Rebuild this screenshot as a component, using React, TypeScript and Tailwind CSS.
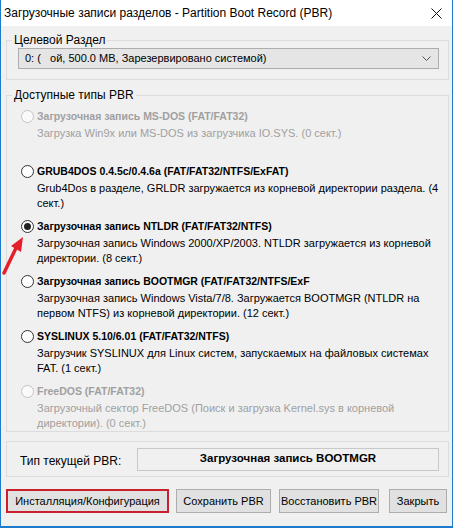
import React from "react";

type Item = {
  title: string;
  desc: string;
  disabled?: boolean;
  checked?: boolean;
};

const items: Item[] = [
  {
    title: "Загрузочная запись MS-DOS (FAT/FAT32)",
    desc: "Загрузка Win9x или MS-DOS из загрузчика IO.SYS. (0 сект.)",
    disabled: true,
  },
  {
    title: "GRUB4DOS 0.4.5c/0.4.6a (FAT/FAT32/NTFS/ExFAT)",
    desc: "Grub4Dos в разделе, GRLDR загружается из корневой директории раздела. (4 сект.)",
  },
  {
    title: "Загрузочная запись NTLDR (FAT/FAT32/NTFS)",
    desc: "Загрузочная запись Windows 2000/XP/2003. NTLDR загружается из корневой директории. (8 сект.)",
    checked: true,
  },
  {
    title: "Загрузочная запись BOOTMGR (FAT/FAT32/NTFS/ExF",
    desc: "Загрузочная запись Windows Vista/7/8. Загружается BOOTMGR  (NTLDR на первом NTFS) из корневой директории. (12 сект.)",
  },
  {
    title: "SYSLINUX 5.10/6.01 (FAT/FAT32/NTFS)",
    desc: "Загрузчик SYSLINUX для Linux систем, запускаемых на файловых системах FAT. (1 сект.)",
  },
  {
    title: "FreeDOS (FAT/FAT32)",
    desc: "Загрузочный сектор FreeDOS (Поиск и загрузка Kernel.sys в корневой директории). (0 сект.)",
    disabled: true,
  },
];

function Radio({ checked, disabled }: { checked?: boolean; disabled?: boolean }) {
  return (
    <div
      className={
        "w-[13px] h-[13px] rounded-full border flex items-center justify-center shrink-0 " +
        (disabled ? "border-[#c4c4c4] bg-[#fafafa]" : "border-[#333333] bg-white")
      }
    >
      {checked && <div className="w-[7px] h-[7px] rounded-full bg-[#222222]" />}
    </div>
  );
}

const ui = { fontFamily: '"Liberation Sans", Arial, sans-serif' };

export default function App() {
  return (
    <div
      className="relative w-[453px] h-[528px] bg-[#f0f0f0] border-x border-b-2 border-[#1c7bcb] flex flex-col text-black"
      style={ui}
    >
      {/* Title bar */}
      <div className="h-[26px] bg-white flex items-center justify-between pl-[3px] pr-[10px] shrink-0">
        <span className="text-[12px] leading-none text-black whitespace-nowrap">
          Загрузочные записи разделов - Partition Boot Record (PBR)
        </span>
        <svg width="11" height="11" viewBox="0 0 11 11" className="mt-[1px]">
          <path d="M0.5 0.5 L10.5 10.5 M10.5 0.5 L0.5 10.5" stroke="#111" strokeWidth="1" />
        </svg>
      </div>

      <div className="flex flex-col pl-[5px] pr-[3px]">
        {/* Group 1 */}
        <fieldset className="mt-[6px] border border-[#dcdcdc] px-0">
          <legend className="ml-[5px] px-[2px] text-[12px] leading-[16px]">Целевой Раздел</legend>
          <div className="pl-[11px] pr-[9px] pb-[10px]">
            <div className="h-[21px] border border-[#adadad] bg-[#e5e5e5] flex items-center justify-between pl-[6px] pr-[7px]">
              <span className="text-[11px] leading-none whitespace-pre">0: (   ой, 500.0 MB, Зарезервировано системой)</span>
              <svg width="9" height="5" viewBox="0 0 9 5">
                <path d="M0.5 0.5 L4.5 4.5 L8.5 0.5" stroke="#555" strokeWidth="1" fill="none" />
              </svg>
            </div>
          </div>
        </fieldset>

        {/* Group 2 */}
        <fieldset className="mt-[7px] border border-[#dcdcdc] px-0">
          <legend className="ml-[5px] px-[2px] text-[12px] leading-[16px]">Доступные типы PBR</legend>
          <div className="flex flex-col pt-[5px] pl-[14px] pr-0 pb-0">
            {items.map((it, i) => (
              <div
                key={i}
                className={"flex flex-col " + (i < items.length - 1 ? "h-[55px]" : "")}
              >
                <div className="flex items-center gap-[3px] h-[17px]">
                  <Radio checked={it.checked} disabled={it.disabled} />
                  <span
                    className={
                      "text-[10.5px] font-bold whitespace-nowrap " +
                      (it.disabled ? "text-[#a0a0a0]" : "text-black")
                    }
                  >
                    {it.title}
                  </span>
                </div>
                <div
                  className={
                    "pl-[16px] mt-[1px] text-[11px] leading-[15px] " +
                    (it.disabled ? "text-[#a0a0a0]" : "text-black")
                  }
                >
                  {it.desc}
                </div>
              </div>
            ))}
          </div>
        </fieldset>

        {/* Status group */}
        <div className="mt-[9px] h-[36px] border border-[#dcdcdc] flex items-center pl-[13px] pr-[9px]">
          <span className="text-[12px] w-[117px] mt-[4px] whitespace-nowrap">Тип текущей PBR:</span>
          <div className="flex-1 h-[23px] border border-[#c8c8c8] bg-[#f0f0f0] flex items-center justify-center">
            <span className="text-[11.5px] font-bold whitespace-nowrap">Загрузочная запись BOOTMGR</span>
          </div>
        </div>

        {/* Buttons */}
        <div className="mt-[12px] flex items-center h-[24px]">
          <div className="w-[163px] h-[24px] border-2 border-[#c8202c] bg-[#e1e1e1] flex items-center justify-center">
            <span className="text-[11px] whitespace-nowrap">Инсталляция/Конфигурация</span>
          </div>
          <div className="ml-[7px] w-[95px] h-[24px] border border-[#adadad] bg-[#e1e1e1] flex items-center justify-center">
            <span className="text-[11px] whitespace-nowrap">Сохранить PBR</span>
          </div>
          <div className="ml-[8px] w-[100px] h-[24px] border border-[#adadad] bg-[#e1e1e1] flex items-center justify-center">
            <span className="text-[11px] whitespace-nowrap">Восстановить PBR</span>
          </div>
          <div className="ml-[10px] w-[58px] h-[24px] border border-[#adadad] bg-[#e1e1e1] flex items-center justify-center">
            <span className="text-[11px] whitespace-nowrap">Закрыть</span>
          </div>
        </div>
      </div>

      {/* Red arrow annotation */}
      <svg
        className="absolute left-0 top-[232px]"
        width="30"
        height="46"
        viewBox="0 0 30 46"
      >
        <path d="M3 41 L15 16" stroke="#e5202a" strokeWidth="3.5" strokeLinecap="round" />
        <path d="M22 5 L10 14 L20 20 Z" fill="#e5202a" />
      </svg>
    </div>
  );
}
